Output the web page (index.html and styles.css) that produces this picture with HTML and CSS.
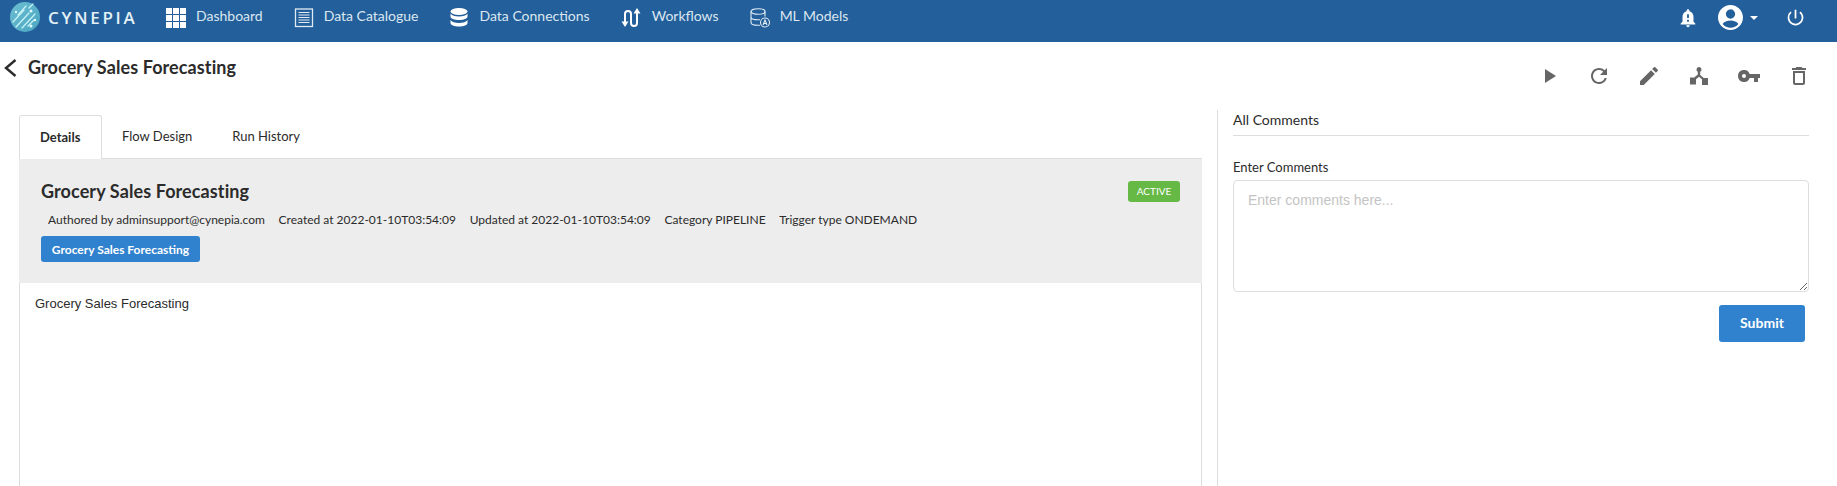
FILE: index.html
```html
<!DOCTYPE html>
<html lang="en">
  <head>
    <meta charset="UTF-8" />
    <meta name="viewport" content="width=device-width, initial-scale=1.0" />
    <title>Grocery Sales Forecasting</title>
    <link rel="stylesheet" href="styles.css">
  </head>
  <body>
    <header class="topbar">
      <div class="brand">
        <svg class="brand-mark" viewBox="0 0 30 30">
          <defs>
            <linearGradient id="markFill" x1="0" y1="0" x2="1" y2="1">
              <stop offset="0" stop-color="#6cbdd2" />
              <stop offset="1" stop-color="#4aa6c2" />
            </linearGradient>
          </defs>
          <circle cx="15" cy="15" r="15" fill="url(#markFill)" />
          <g stroke="#c8f4f6" stroke-width="1.200" stroke-linecap="round">
            <path d="M3 20 14 8" />
            <path d="M6 25 19 11" />
            <path d="M12 26 25 12" />
            <path d="M8 13 16 4" />
            <path d="M18 24 24 18" />
            <path d="M19 6 23 2" />
          </g>
          <g fill="#e0f8fa">
            <circle cx="21" cy="9" r="1.500" />
            <circle cx="21" cy="24" r="1.500" />
            <circle cx="6" cy="10" r="1.200" />
            <circle cx="25" cy="18" r="1.200" />
          </g>
        </svg>
        <span class="brand-name">CYNEPIA</span>
      </div>

      <nav class="main-nav">
        <a class="nav-item">
          <svg class="nav-icon" viewBox="0 0 20 20" fill="#fff">
            <path d="M0 0h6v6H0zM7 0h6v6H7zM14 0h6v6h-6zM0 7h6v6H0zM7 7h6v6H7zM14 7h6v6h-6zM0 14h6v6H0zM7 14h6v6H7zM14 14h6v6h-6z" />
          </svg>
          <span>Dashboard</span>
        </a>
        <a class="nav-item">
          <svg class="nav-icon" viewBox="0 0 20 20" fill="none" stroke="#dfeaf3">
            <rect x="1.500" y="1" width="17" height="17.500" stroke-width="1.300" />
            <path d="M4.500 4.500h11M4.500 7h11M4.500 9.500h11M4.500 12h11M4.500 14.500h11" stroke-width="1.200" />
          </svg>
          <span>Data Catalogue</span>
        </a>
        <a class="nav-item">
          <svg class="nav-icon" viewBox="0 0 20 20" fill="#fff">
            <ellipse cx="10" cy="3.500" rx="8.500" ry="3.500" />
            <path d="M1.500 5.500v3c0 2 3.800 3.500 8.500 3.500s8.500-1.500 8.500-3.500v-3c-1 2-4.500 3-8.500 3s-7.500-1-8.500-3z" />
            <path d="M1.500 10.500v3c0 2 3.800 3.500 8.500 3.500s8.500-1.500 8.500-3.500v-3c-1 2-4.500 3-8.500 3s-7.500-1-8.500-3z" transform="translate(0 1.500)" />
          </svg>
          <span>Data Connections</span>
        </a>
        <a class="nav-item nav-item-wide">
          <svg class="nav-icon" viewBox="0 0 20 20" fill="none" stroke="#fff" stroke-width="2">
            <path d="M4 15V6a3 3 0 0 1 6 0v9a3 3 0 0 0 6 0V4" />
            <path d="M.5 13.500h7L4 19zM12.500 5.500h7L16 0z" fill="#fff" stroke="none" />
          </svg>
          <span>Workflows</span>
        </a>
        <a class="nav-item">
          <svg class="nav-icon" viewBox="0 0 20 20" fill="none" stroke="#e2ecf4" stroke-width="1.100">
            <ellipse cx="8" cy="3.500" rx="7" ry="2.800" />
            <path d="M1 3.500v11c0 1.500 3 2.800 7 2.800h2M1 9c0 1.500 3 2.800 7 2.800h2M15 3.500v5" />
            <circle cx="15" cy="14.500" r="4.500" />
            <path d="M13 17l2-5 2 5M13.700 15.500h2.600" />
          </svg>
          <span>ML Models</span>
        </a>
      </nav>

      <div class="user-tools">
        <svg class="tool-bell" viewBox="0 0 24 24" fill="#fff">
          <path d="M12 22c1.100 0 2-.9 2-2h-4c0 1.100.9 2 2 2zm6-6v-5c0-3.070-1.630-5.640-4.500-6.320V4c0-.83-.67-1.500-1.500-1.500s-1.500.67-1.500 1.500v.68C7.640 5.360 6 7.920 6 11v5l-2 2v1h16v-1l-2-2zm-5 0h-2v-2h2v2zm0-4h-2V8h2v4z" />
        </svg>
        <svg class="tool-user" viewBox="2 2 20 20" fill="#fff">
          <path d="M12 2C6.480 2 2 6.480 2 12s4.480 10 10 10 10-4.480 10-10S17.520 2 12 2zm0 3.500a3.700 3.700 0 1 1 0 7.400 3.700 3.700 0 0 1 0-7.400zm0 14.700a8.200 8.200 0 0 1-6.300-3c.9-1.900 3.700-2.900 6.300-2.900s5.400 1 6.300 2.900a8.200 8.200 0 0 1-6.300 3z" />
        </svg>
        <span class="caret"></span>
        <svg class="tool-power" viewBox="0 0 24 24" fill="#fff">
          <path d="M13 3h-2v10h2V3zm4.830 2.170l-1.420 1.420A6.920 6.920 0 0 1 19 12c0 3.870-3.130 7-7 7A6.995 6.995 0 0 1 7.580 6.580L6.170 5.170A8.932 8.932 0 0 0 3 12c0 4.970 4.030 9 9 9s9-4.030 9-9c0-2.740-1.230-5.190-3.170-6.830z" />
        </svg>
      </div>
    </header>

    <div class="title-row">
      <div class="title-left">
        <svg class="back-icon" viewBox="0 0 13 18" fill="none" stroke="#2b2b2b" stroke-width="2.400">
          <path d="M11.500 1 2 9l9.500 8" />
        </svg>
        <h1>Grocery Sales Forecasting</h1>
      </div>
      <div class="actions">
        <svg viewBox="0 0 24 24"><path d="M8 5v14l11-7z" /></svg>
        <svg viewBox="0 0 24 24"><path d="M17.650 6.350A7.958 7.958 0 0 0 12 4c-4.420 0-7.990 3.580-7.990 8s3.570 8 7.990 8c3.730 0 6.840-2.550 7.730-6h-2.080A5.990 5.990 0 0 1 12 18c-3.310 0-6-2.690-6-6s2.690-6 6-6c1.660 0 3.140.69 4.220 1.780L13 11h7V4l-2.350 2.350z" /></svg>
        <svg viewBox="0 0 24 24"><path d="M3 17.250V21h3.750L17.810 9.940l-3.750-3.750L3 17.250zM20.710 7.040a1 1 0 0 0 0-1.410l-2.340-2.340a1 1 0 0 0-1.410 0l-1.830 1.830 3.750 3.750 1.830-1.830z" /></svg>
        <svg viewBox="0 0 24 24"><path d="M12 3a2.500 2.500 0 0 0-1.200 4.700v2.800l-3.900 3.300-.4-.3H3v7h6v-5.200l3-2.500 3 2.500V21h6v-7h-3.500l-.4.300-3.900-3.300V7.700A2.500 2.500 0 0 0 12 3z" /></svg>
        <svg viewBox="0 0 24 24"><path d="M7 14a2 2 0 1 1 0-4 2 2 0 0 1 0 4zm5.650-4A5.990 5.990 0 0 0 1 12a6 6 0 0 0 11.650 2H17v4h4v-4h2v-4H12.650z" /></svg>
        <svg viewBox="0 0 24 24"><path d="M6 19c0 1.100.9 2 2 2h8c1.100 0 2-.9 2-2V7H6v12zM8 9h8v10H8V9zm7.500-5l-1-1h-5l-1 1H5v2h14V4h-3.500z" /></svg>
      </div>
    </div>

    <main class="content">
      <section class="left-col">
        <ul class="tabs">
          <li class="tab active">Details</li>
          <li class="tab">Flow Design</li>
          <li class="tab">Run History</li>
        </ul>
        <div class="panel">
          <div class="summary">
            <div class="summary-head">
              <h2>Grocery Sales Forecasting</h2>
              <span class="badge">ACTIVE</span>
            </div>
            <div class="meta">
              <span>Authored by adminsupport@cynepia.com</span>
              <span>Created at 2022-01-10T03:54:09</span>
              <span>Updated at 2022-01-10T03:54:09</span>
              <span>Category PIPELINE</span>
              <span>Trigger type ONDEMAND</span>
            </div>
            <button class="tag-btn" type="button">Grocery Sales Forecasting</button>
          </div>
          <p class="description">Grocery Sales Forecasting</p>
        </div>
      </section>

      <aside class="comments">
        <h3>All Comments</h3>
        <form class="comment-form">
          <label for="commentBox">Enter Comments</label>
          <textarea id="commentBox" placeholder="Enter comments here..."></textarea>
          <button class="submit-btn" type="button">Submit</button>
        </form>
      </aside>
    </main>
  </body>
</html>
```

FILE: styles.css
```css
* {
  box-sizing: border-box;
}
html,
body {
  height: 100%;
}
body {
  margin: 0;
  display: flex;
  flex-direction: column;
  overflow: hidden;
  font-family: Lato, "Liberation Sans", sans-serif;
  color: #2b2b2b;
  background: #fff;
}

/* top bar */
.topbar {
  display: flex;
  align-items: flex-start;
  flex: 0 0 42px;
  height: 42px;
  background: #235f9a;
  color: #dbe7f1;
}
.brand {
  display: flex;
  align-items: center;
  width: 166px;
  padding: 2px 0 0 10px;
  gap: 8px;
}
.brand-mark {
  width: 30px;
  height: 30px;
}
.brand-name {
  font-family: "Open Sans", sans-serif;
  font-size: 17px;
  font-weight: 600;
  letter-spacing: 2.7px;
  color: #e3f1f7;
}
.main-nav {
  display: flex;
  gap: 31px;
  padding-top: 6px;
}
.nav-item {
  display: flex;
  align-items: flex-start;
  gap: 10px;
  font-size: 14px;
  line-height: 20px;
}
.nav-item-wide {
  gap: 11px;
}
.nav-icon {
  width: 20px;
  height: 20px;
  margin-top: 2px;
}
.user-tools {
  display: flex;
  align-items: center;
  margin-left: auto;
  padding: 5px 31px 0 0;
}
.tool-bell {
  width: 22px;
  height: 22px;
}
.tool-user {
  width: 25px;
  height: 25px;
  margin-left: 19px;
}
.caret {
  width: 0;
  height: 0;
  margin-left: 7px;
  border-left: 4px solid transparent;
  border-right: 4px solid transparent;
  border-top: 4px solid #fff;
}
.tool-power {
  width: 21px;
  height: 21px;
  margin-left: 27px;
}

/* title row */
.title-row {
  display: flex;
  justify-content: space-between;
  flex: 0 0 68px;
}
.title-left {
  display: flex;
  align-items: flex-start;
  gap: 11px;
  padding: 16px 0 0 4px;
}
.back-icon {
  width: 13px;
  height: 18px;
  margin-top: 1px;
}
h1 {
  margin: 0;
  font-size: 18px;
  line-height: 18px;
  font-weight: 700;
  letter-spacing: 0.1px;
}
.actions {
  display: flex;
  gap: 26px;
  padding: 22px 26px 0 0;
}
.actions svg {
  width: 24px;
  height: 24px;
  fill: #666;
}

/* main area */
.content {
  display: flex;
  flex: 1;
  min-height: 0;
}
.left-col {
  display: flex;
  flex-direction: column;
  margin: 5px 15px 0 19px;
  flex: 0 0 1183px;
}
.tabs {
  display: flex;
  margin: 0;
  padding: 0;
  list-style: none;
  height: 43px;
  font-size: 13px;
}
.tab {
  padding: 13px 20px 0;
  line-height: 16px;
}
.tab.active {
  width: 83px;
  margin-bottom: -1px;
  padding-top: 13px;
  background: #fff;
  border: 1px solid #ddd;
  border-bottom: 0;
  border-radius: 3px 3px 0 0;
  font-weight: 700;
  position: relative;
  z-index: 1;
}
.panel {
  flex: 1;
  border: 1px solid #ddd;
  border-bottom: 0;
}
.summary {
  height: 124px;
  padding: 20px 18px 0 22px;
  margin: 0 -1px 0 -1px;
  background: #ededed;
}
.summary-head {
  display: flex;
  justify-content: space-between;
  align-items: flex-start;
}
h2 {
  margin: 0;
  font-size: 18px;
  line-height: 24px;
  font-weight: 700;
  letter-spacing: 0.1px;
}
.badge {
  width: 52px;
  height: 21px;
  margin: 2px 4px 0 0;
  background: #67b946;
  border-radius: 3px;
  color: #fff;
  font-size: 10px;
  line-height: 21px;
  text-align: center;
}
.meta {
  display: flex;
  gap: 13.7px;
  margin-top: 9px;
  padding-left: 7px;
  font-size: 12px;
  line-height: 16px;
}
.tag-btn {
  display: block;
  width: 159px;
  height: 26px;
  margin-top: 8px;
  padding: 0;
  background: #3182ce;
  border: 0;
  border-radius: 3px;
  color: #fff;
  font-family: inherit;
  font-size: 12px;
  font-weight: 700;
}
.description {
  margin: 12px 0 0 15px;
  font-family: "Liberation Sans", Arial, sans-serif;
  font-size: 13px;
  line-height: 18px;
}

/* comments */
.comments {
  flex: 1;
  padding: 0 28px 0 15px;
  border-left: 1px solid #ddd;
}
.comments h3 {
  margin: 0;
  height: 26px;
  padding-top: 1px;
  border-bottom: 1px solid #ddd;
  font-size: 14px;
  line-height: 17px;
  font-weight: 400;
}
.comment-form {
  display: flex;
  flex-direction: column;
  margin-top: 23px;
}
.comment-form label {
  font-size: 13px;
  line-height: 16px;
}
.comment-form textarea {
  height: 112px;
  margin-top: 5px;
  padding: 11px 14px;
  border: 1px solid #ddd;
  border-radius: 4px;
  font-family: "Liberation Sans", Arial, sans-serif;
  font-size: 14px;
  line-height: 16px;
}
.comment-form textarea::placeholder {
  color: #c4c4c4;
}
.submit-btn {
  align-self: flex-end;
  width: 86px;
  height: 37px;
  margin: 13px 4px 0 0;
  padding: 0 0 2px;
  background: #3182ce;
  border: 0;
  border-radius: 3px;
  color: #fff;
  font-family: inherit;
  font-size: 14px;
  font-weight: 700;
}
```
